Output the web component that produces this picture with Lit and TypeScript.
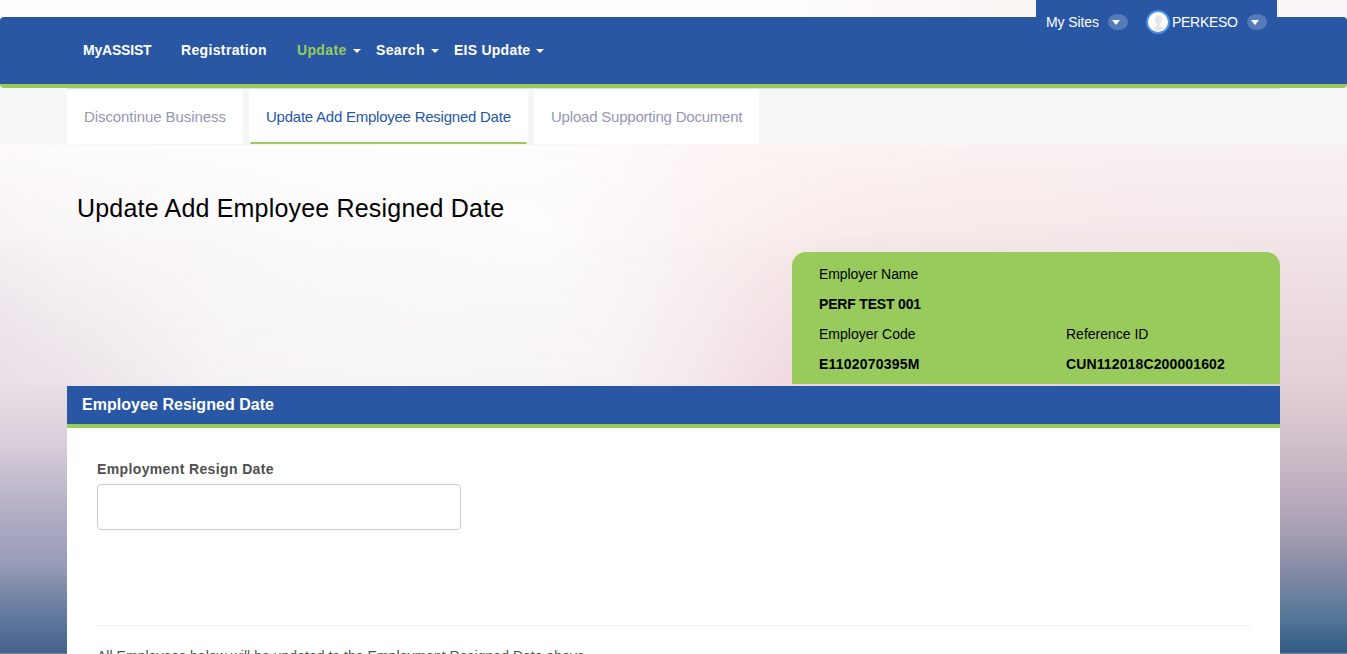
import { LitElement, html, css } from "lit";
import { customElement } from "lit/decorators.js";

const menu = [
  { label: "MyASSIST", cls: "m1", caret: false },
  { label: "Registration", cls: "m2", caret: false },
  { label: "Update", cls: "m3 active", caret: true },
  { label: "Search", cls: "m4", caret: true },
  { label: "EIS Update", cls: "m5", caret: true },
];

@customElement("app-root")
export class AppRoot extends LitElement {
  static styles = css`
    :host { display: block; height: 654px; overflow: hidden; font-family: "Liberation Sans", Arial, sans-serif; color: #000; }
    * { box-sizing: border-box; }
    .page {
      height: 654px; overflow: hidden; display: flex; flex-direction: column; position: relative; white-space: nowrap;
      background: linear-gradient(90deg, #fefdfd 0 750px, #fcf6f5 1000px, #f9f5f8 1347px);
    }
    .wash { position: absolute; left: 0; right: 0; top: 145px; height: 242px; }
    .mid { background: linear-gradient(90deg, #f5f0f3 0, #f8f5f7 67px, #fcfafb 300px, #fdfcfc 550px, #f9f1f0 700px, #f7e7e7 850px, #f4e5e7 1100px, #f2e5e9 1347px); }
    .upper { background: linear-gradient(90deg, #fdfafa 0, #fefdfe 400px, #fefafa 620px, #fdf4f3 720px, #faf0f0 1000px, #f8f0f0 1280px, #f8eff3 1347px); mask-image: linear-gradient(180deg, #000 0, transparent 120px); }
    .lower { background: linear-gradient(90deg, #e8dde6 0, #ebe2e8 67px, #f5f2f5 230px, #f6f4f5 400px, #f6f2f3 600px, #f3e7ea 700px, #efd8de 790px, #e3d0d8 1280px, #e2d0d8 1347px); mask-image: linear-gradient(180deg, transparent 90px, #000 242px); }
    .side { position: absolute; top: 386px; bottom: 0; width: 67px; border-bottom: 1px solid #6f86a5; }
    .left { left: 0; background: linear-gradient(180deg, #e9dee6 0, #dccfdc 54px, #c6bfd0 89px, #aeabc2 134px, #979cb8 179px, #7081a3 216px, #56709a 244px, #456089 268px); }
    .right { right: 0; background: linear-gradient(180deg, #e2d0d7 0, #d3c3cc 49px, #bfb0c0 99px, #a49eb0 149px, #7c86a3 194px, #56789a 229px, #2f5b83 268px); }
    .bar { position: relative; margin-top: 17px; height: 71px; background: #2957a4; border-bottom: 4px solid #99cb5c; border-radius: 4px; padding: 25px 0 0 83px; flex: none; }
    .menu { display: flex; font-size: 14px; font-weight: 700; line-height: 16px; color: #fff; letter-spacing: .35px; }
    .item { display: flex; align-items: center; }
    .m1 { width: 98px; letter-spacing: -.2px; } .m2 { width: 116px; } .m3 { width: 79px; } .m4 { width: 78px; } .m5 { width: 91px; letter-spacing: .25px; }
    .active .label { color: #99cb5c; }
    .caret { width: 0; border: 4px solid transparent; border-top-color: #fff; border-bottom: 0; margin: 1px 0 0 6px; }
    .user { position: absolute; top: 0; left: 1036px; width: 241px; height: 44px; background: #2957a4; display: flex; align-items: center; color: #fff; font-size: 14px; padding-left: 10px; }
    .pill { display: block; width: 20px; height: 16px; }
    .mysites { width: 62px; letter-spacing: -.1px; }
    .avatar { width: 24px; height: 24px; margin: 0 2px 0 18px; }
    .name { width: 75px; letter-spacing: -.28px; }
    .tabs { position: relative; height: 57px; flex: none; background: #f6f6f6; padding-left: 67px; display: flex; gap: 6px; align-items: flex-start; }
    .line { position: absolute; top: 0; left: 67px; width: 1213px; height: 1px; background: #dedede; }
    .tab { height: 54px; margin-top: 2px; background: #fff; color: #9497b4; font-size: 15px; line-height: 54px; padding-left: 17px; }
    .t1 { width: 176px; letter-spacing: -.08px; } .t2 { position: relative; width: 279px; color: #2957a4; letter-spacing: -.24px; } .t3 { width: 225px; letter-spacing: -.21px; }
    .t2::after { content: ""; position: absolute; left: 1px; right: 1px; bottom: 0; height: 2px; background: #99cb5c; border-radius: 2px 2px 0 0; }
    .main { position: relative; margin-left: 67px; width: 1213px; flex: 1; display: flex; flex-direction: column; }
    h1 { margin: 48px 0 0 10px; font-size: 25px; line-height: 30px; height: 59px; font-weight: 400; letter-spacing: .19px; }
    .info { align-self: flex-end; width: 488px; height: 132px; flex: none; background: #99cb5c; border-radius: 14px 14px 0 0; display: grid; grid-template-columns: 247px 1fr; grid-auto-rows: 30px; line-height: 30px; padding: 7px 0 0 27px; font-size: 14px; }
    .wide { grid-column: 1 / 3; }
    .info .wide { letter-spacing: -.1px; }
    .info b { letter-spacing: .2px; }
    .info b.wide { letter-spacing: -.18px; }
    .info .ref { letter-spacing: .13px; }
    .head { margin-top: 2px; height: 42px; flex: none; background: #2957a4; border-bottom: 4px solid #99cb5c; color: #fff; font-size: 16px; font-weight: 700; line-height: 37px; padding-left: 15px; letter-spacing: .04px; }
    .body { background: #fff; flex: none; height: 226px; padding: 32px 30px 0; overflow: hidden; color: #505050; }
    label { display: block; font-size: 14px; font-weight: 700; line-height: 18px; height: 24px; letter-spacing: .37px; }
    .field { width: 364px; height: 46px; border: 1px solid #ccc; border-radius: 4px; }
    hr { border: 0; border-top: 1px solid #eee; margin: 95px 0 0; }
    .note { font-size: 14px; line-height: 20px; margin: 20px 0 0; letter-spacing: .03px; }
  `;

  pill() {
    return html`<svg class="pill" viewBox="0 0 20 16"><ellipse cx="10" cy="8" rx="10" ry="8" fill="#577bb8"/><path d="M4 6h8l-4 5z" fill="#fff"/></svg>`;
  }

  render() {
    return html`<div class="page">
      <div class="wash mid"></div><div class="wash upper"></div><div class="wash lower"></div>
      <div class="side left"></div><div class="side right"></div>
      <header class="bar"><nav class="menu">
        ${menu.map(m => html`<div class="item ${m.cls}"><span class="label">${m.label}</span>${m.caret ? html`<span class="caret"></span>` : ""}</div>`)}
      </nav></header>
      <div class="user"><span class="mysites">My Sites</span>${this.pill()}
        <svg class="avatar" viewBox="0 0 24 24"><circle cx="12" cy="12" r="11" fill="#fff" stroke="#4b90df" stroke-width="2"/><ellipse cx="12.500" cy="9.500" rx="3.800" ry="4.500" fill="#e8e8e8"/><path d="M10.500 12h4v4l3 2c-2 4-8 4-10.500 0l3.500-2z" fill="#e8e8e8"/></svg>
        <span class="name">PERKESO</span>${this.pill()}
      </div>
      <nav class="tabs"><div class="line"></div>
        <div class="tab t1">Discontinue Business</div>
        <div class="tab t2">Update Add Employee Resigned Date</div>
        <div class="tab t3">Upload Supporting Document</div>
      </nav>
      <main class="main">
        <h1>Update Add Employee Resigned Date</h1>
        <section class="info">
          <span class="wide">Employer Name</span><b class="wide">PERF TEST 001</b>
          <span>Employer Code</span><span>Reference ID</span>
          <b>E1102070395M</b><b class="ref">CUN112018C200001602</b>
        </section>
        <div class="head">Employee Resigned Date</div>
        <section class="body">
          <label>Employment Resign Date</label>
          <div class="field"></div>
          <hr>
          <p class="note">All Employees below will be updated to the Employment Resigned Date above.</p>
        </section>
      </main>
    </div>`;
  }
}
